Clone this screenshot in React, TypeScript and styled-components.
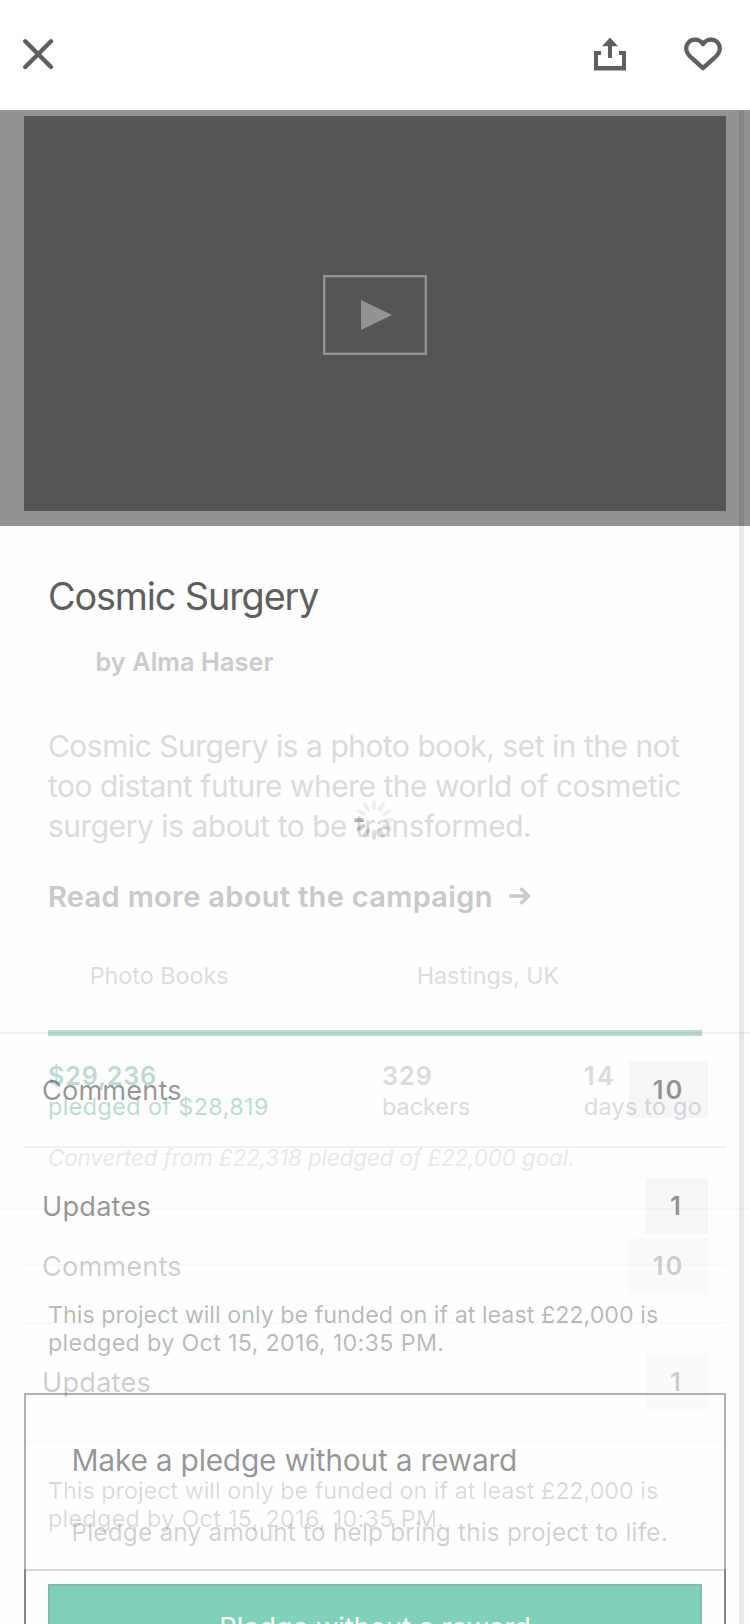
import React from 'react';
import styled, { createGlobalStyle } from 'styled-components';

const GlobalStyle = createGlobalStyle`
  *, *::before, *::after { box-sizing: border-box; }
  body { margin: 0; background: #fefefe; font-family: Inter, "Liberation Sans", sans-serif; }
  button { font: inherit; border: 0; padding: 0; background: none; display: flex; }
  h1, h2, p { margin: 0; font-weight: 400; }
`;

const Screen = styled.div`
  position: relative;
  display: flex;
  flex-direction: column;
  width: 750px;
  height: 1624px;
  overflow: hidden;
  background: #fefefe;
`;

const Header = styled.header`
  display: flex;
  flex: none;
  align-items: center;
  height: 110px;
  padding: 0 26px 2px 22px;
  gap: 55px;
  background: #fff;
`;

const IconButton = styled.button<{ $first?: boolean }>`
  margin-right: ${p => (p.$first ? 'auto' : '0')};
  color: #5f5f5f;
`;

const Media = styled.div`
  flex: none;
  height: 416px;
  padding: 6px 24px 15px;
  background: #939393;
`;

const Video = styled.div`
  display: flex;
  align-items: center;
  justify-content: center;
  height: 395px;
  padding-top: 3px;
  background: #555;
`;

const PlayButton = styled.button`
  align-items: center;
  justify-content: center;
  width: 104px;
  height: 80px;
  border: 2px solid #939393;
  box-shadow: inset 0 0 0 1px #6f6f6f;
`;

const Content = styled.main`
  position: relative;
  flex: none;
`;

const Project = styled.section`
  padding: 46px 48px 36px;
`;

const Title = styled.h1`
  font-size: 37.8px;
  line-height: 49px;
  margin-bottom: -1px;
  letter-spacing: -1.13px;
  color: #5e5e5e;
`;

const Author = styled.p`
  margin: 26px 0 48px 47.5px;
  font-size: 25.2px;
  font-weight: 600;
  line-height: 32px;
  letter-spacing: 0.1px;
  color: #cbcbcb;
`;

const Blurb = styled.p`
  font-size: 29.8px;
  line-height: 40px;
  letter-spacing: -0.4px;
  white-space: nowrap;
  color: #d9dada;
`;

const ReadMore = styled.div`
  display: flex;
  align-items: center;
  gap: 15px;
  height: 40px;
  margin-top: 30px;
  font-size: 29px;
  font-weight: 600;
  letter-spacing: 0.32px;
  color: #c9c9c9;
`;

const Tags = styled.div`
  display: grid;
  grid-template-columns: 327px 1fr;
  margin: 45px 0 39px 41.7px;
  font-size: 23.3px;
  line-height: 30px;
  color: #dbdcdc;
`;

const Progress = styled.div`
  height: 6px;
  background: #bddbd5;
`;

const Stats = styled.div`
  display: grid;
  grid-template-columns: 334px 202px 1fr;
  margin-top: 24px;
`;

const Stat = styled.div<{ $accent?: boolean; $track: number; $labelTrack: number }>`
  white-space: nowrap;
  color: ${p => (p.$accent ? '#bddbd5' : '#d9dada')};

  strong {
    display: block;
    font-size: 25.2px;
    font-weight: 600;
    line-height: 32px;
    letter-spacing: ${p => p.$track}px;
  }
  span {
    display: block;
    font-size: 23.3px;
    line-height: 30px;
    letter-spacing: ${p => p.$labelTrack}px;
  }
`;

const Conversion = styled.p`
  margin-top: 22px;
  font-size: 22.3px;
  font-style: italic;
  line-height: 28px;
  letter-spacing: -0.05px;
  white-space: nowrap;
  color: #e8e8e8;
`;

const Incoming = styled.div`
  position: absolute;
  top: 506px;
  left: 0;
  right: 0;
`;

const Rule = styled.hr<{ $inset?: boolean; $alpha: number }>`
  height: 2px;
  margin: 0 ${p => (p.$inset ? 24 : 0)}px;
  border: 0;
  background: rgba(0, 0, 0, ${p => p.$alpha});
`;

const MenuRow = styled.div<{ $pad: number }>`
  display: flex;
  align-items: center;
  justify-content: space-between;
  padding: ${p => p.$pad}px 42px;
`;

const MenuLabel = styled.span<{ $faded: boolean; $track: number }>`
  padding-top: 1px;
  font-size: 27.2px;
  line-height: 55px;
  letter-spacing: ${p => p.$track}px;
  color: rgba(0, 0, 0, ${p => (p.$faded ? 0.21 : 0.42)});
`;

const Count = styled.span<{ $faded: boolean; $wide?: boolean }>`
  width: ${p => (p.$wide ? 79 : 62)}px;
  height: 56px;
  font-size: 25.6px;
  font-weight: 600;
  line-height: 56px;
  letter-spacing: ${p => (p.$wide ? 2 : 3)}px;
  text-align: center;
  color: rgba(0, 0, 0, ${p => (p.$faded ? 0.21 : 0.42)});
  background: ${p => (p.$faded ? 'rgba(0, 0, 0, 0.014)' : 'rgba(94, 94, 154, 0.05)')};
`;

const Notice = styled.p<{ $faded: boolean }>`
  margin: 35px 48px 36px;
  font-size: 23.3px;
  line-height: 28px;
  white-space: nowrap;
  color: ${p => (p.$faded ? 'rgba(10, 20, 15, 0.155)' : 'rgba(6, 14, 10, 0.3)')};

  span { letter-spacing: 0.32px; }
`;

const PledgeCard = styled.section<{ $faded: boolean }>`
  margin: 0 24px;
  padding: 45px 22px 0;
  border: 2px solid ${p => (p.$faded ? 'rgba(40, 55, 50, 0.3)' : 'rgba(0, 0, 0, 0.3)')};
  border-top-color: rgba(0, 0, 0, ${p => (p.$faded ? 0.15 : 0.3)});
  border-bottom: 0;
`;

const PledgeTitle = styled.h2<{ $faded: boolean }>`
  padding-left: 23.5px;
  font-size: 30px;
  line-height: 40px;
  letter-spacing: -0.27px;
  color: rgba(0, 0, 0, ${p => (p.$faded ? 0.21 : 0.42)});
`;

const PledgeText = styled.p`
  margin: 36px 0;
  padding-left: 23.5px;
  font-size: 24.3px;
  line-height: 32px;
  letter-spacing: 0.23px;
  white-space: nowrap;
  color: rgba(6, 14, 12, 0.2);
`;

const PledgeButton = styled.button`
  align-items: center;
  justify-content: center;
  width: 100%;
  height: 86px;
  border: 2px solid #7ebbae;
  background: #81d0ba;
  color: #fff;
  font-size: 27.2px;
`;

const ScrollThumb = styled.div`
  position: absolute;
  top: 110px;
  right: 6px;
  width: 5px;
  height: 1600px;
  border-radius: 3px;
  background: rgba(0, 0, 0, 0.09);
`;

const SpinnerWrap = styled.div`
  position: absolute;
  top: 800px;
  left: 354px;
  width: 40px;
  height: 40px;
`;

const CloseIcon = () => (
  <svg width="32" height="32" viewBox="0 0 32 32" fill="none" stroke="currentColor" strokeWidth="4.4" strokeLinecap="round">
    <path d="M3.3 3.3 29 29M29 3.3 3.3 29" />
  </svg>
);

const ShareIcon = () => (
  <svg width="34" height="36" viewBox="0 0 34 36" fill="currentColor">
    <path d="M1 15h7v4H5v11h24V19h-3v-4h7v19.6H1z" />
    <path d="M17 1.5 25 10.3h-6V22h-4V10.3H9z" />
  </svg>
);

const HeartIcon = () => (
  <svg width="42" height="36" viewBox="0 0 42 36" fill="none" stroke="currentColor" strokeWidth="4.3" strokeLinejoin="round">
    <path d="M21 8.2C19.2 5.3 16.3 3.7 12.9 3.7 8 3.7 4.2 7.4 4.2 12.4c0 4.6 2.8 7.3 6 10L21 32.2l10.8-9.8c3.2-2.7 6-5.4 6-10 0-5-3.8-8.7-8.7-8.7-3.4 0-6.3 1.6-8.1 4.5z" />
  </svg>
);

const PlayIcon = () => (
  <svg width="31" height="30" viewBox="0 0 31 30" fill="#939393" style={{ marginLeft: 3 }}>
    <path d="M0 0 31 15 0 30z" />
  </svg>
);

const ArrowIcon = () => (
  <svg width="24" height="22" viewBox="0 0 24 22" fill="none" stroke="currentColor" strokeWidth="3.6">
    <path d="M1 11h19.5M12.6 3.2l7.8 7.8-7.8 7.8" />
  </svg>
);

const SPOKES = [0.06, 0.06, 0.06, 0.06, 0.09, 0.11, 0.13, 0.16, 0.19, 0.23, 0.06, 0.06];

const Spinner = () => (
  <SpinnerWrap>
    <svg width="40" height="40" viewBox="-20 -20 40 40" stroke="#000" strokeWidth="4" strokeLinecap="round">
      {SPOKES.map((opacity, i) => (
        <line key={i} x1="0" y1="-12" x2="0" y2="-18" opacity={opacity} transform={`rotate(${i * 30})`} />
      ))}
    </svg>
  </SpinnerWrap>
);

function Details({ faded = false }: { faded?: boolean }) {
  return (
    <>
      <Rule $alpha={faded ? 0.02 : 0.05} />
      <MenuRow $pad={28}>
        <MenuLabel $faded={faded} $track={0.12}>Comments</MenuLabel>
        <Count $faded={faded} $wide>10</Count>
      </MenuRow>
      <Rule $inset $alpha={faded ? 0.02 : 0.05} />
      <MenuRow $pad={30}>
        <MenuLabel $faded={faded} $track={0.2}>Updates</MenuLabel>
        <Count $faded={faded}>1</Count>
      </MenuRow>
      <Rule $inset $alpha={faded ? 0.01 : 0.02} />
      <Notice $faded={faded}>
        This project will only be funded on if at least £22,000 is
        <br />
        <span>pledged by Oct 15, 2016, 10:35 PM.</span>
      </Notice>
      <PledgeCard $faded={faded}>
        <PledgeTitle $faded={faded}>Make a pledge without a reward</PledgeTitle>
        {!faded && (
          <>
            <PledgeText>Pledge any amount to help bring this project to life.</PledgeText>
            <PledgeButton>Pledge without a reward</PledgeButton>
          </>
        )}
      </PledgeCard>
    </>
  );
}

export default function App() {
  return (
    <Screen>
      <GlobalStyle />
      <Header>
        <IconButton $first aria-label="Close"><CloseIcon /></IconButton>
        <IconButton aria-label="Share"><ShareIcon /></IconButton>
        <IconButton aria-label="Save"><HeartIcon /></IconButton>
      </Header>
      <Media>
        <Video>
          <PlayButton aria-label="Play"><PlayIcon /></PlayButton>
        </Video>
      </Media>
      <Content>
        <Project>
          <Title>Cosmic Surgery</Title>
          <Author>by Alma Haser</Author>
          <Blurb>
            Cosmic Surgery is a photo book, set in the not
            <br />
            too distant future where the world of cosmetic
            <br />
            surgery is about to be transformed.
          </Blurb>
          <ReadMore>
            Read more about the campaign
            <ArrowIcon />
          </ReadMore>
          <Tags>
            <span>Photo Books</span>
            <span>Hastings, UK</span>
          </Tags>
          <Progress />
          <Stats>
            <Stat $accent $track={0.8} $labelTrack={0.43}>
              <strong>$29,236</strong>
              <span>pledged of $28,819</span>
            </Stat>
            <Stat $track={1} $labelTrack={0.08}>
              <strong>329</strong>
              <span>backers</span>
            </Stat>
            <Stat $track={2.4} $labelTrack={0.28}>
              <strong>14</strong>
              <span>days to go</span>
            </Stat>
          </Stats>
          <Conversion>Converted from £22,318 pledged of £22,000 goal.</Conversion>
        </Project>
        <Details faded />
        <Incoming>
          <Details />
        </Incoming>
      </Content>
      <Spinner />
      <ScrollThumb />
    </Screen>
  );
}
